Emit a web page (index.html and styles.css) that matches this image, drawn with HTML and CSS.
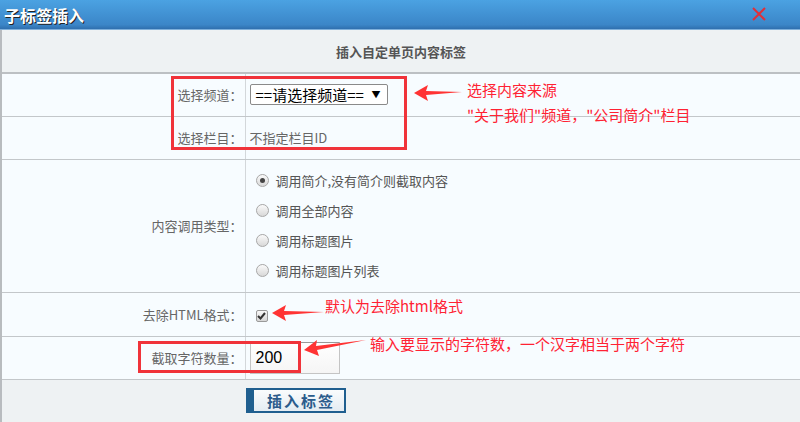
FILE: index.html
```html
<!DOCTYPE html>
<html>
<head>
<meta charset="utf-8">
<link rel="stylesheet" href="styles.css">
</head>
<body>
<div class="dialog">
  <div class="titlebar">
    <span class="title">子标签插入</span>
    <svg class="close" width="14" height="14" viewBox="0 0 14 14"><path d="M1 1 L13 13 M13 1 L1 13" stroke="#e0303a" stroke-width="2"/></svg>
  </div>
  <div class="body">
    <table class="form">
      <tr class="head"><td colspan="2">插入自定单页内容标签</td></tr>
      <tr class="r43">
        <td class="lbl">选择频道：</td>
        <td class="val"><div class="select"><span>==请选择频道==</span><span class="caret">▼</span></div></td>
      </tr>
      <tr class="r43">
        <td class="lbl">选择栏目：</td>
        <td class="val">不指定栏目ID</td>
      </tr>
      <tr class="rbig">
        <td class="lbl">内容调用类型：</td>
        <td class="val">
          <div class="radios">
            <label class="radio"><span class="dot on"></span>调用简介,没有简介则截取内容</label>
            <label class="radio"><span class="dot"></span>调用全部内容</label>
            <label class="radio"><span class="dot"></span>调用标题图片</label>
            <label class="radio"><span class="dot"></span>调用标题图片列表</label>
          </div>
        </td>
      </tr>
      <tr class="r44">
        <td class="lbl">去除HTML格式：</td>
        <td class="val"><span class="check"><svg width="9" height="8" viewBox="0 0 9 8"><path d="M1 4 L3.5 6.5 L8 1" stroke="#333" stroke-width="2" fill="none"/></svg></span></td>
      </tr>
      <tr class="r43">
        <td class="lbl">截取字符数量：</td>
        <td class="val"><div class="num">200</div></td>
      </tr>
      <tr class="foot"><td></td><td><button class="btn">插入标签</button></td></tr>
    </table>

    <div class="anno box1"></div>
    <div class="anno box2"></div>
    <svg class="anno arr arr1" width="48" height="16" viewBox="0 0 48 16"><path d="M0 8 L14 0 L12 6 L48 7 L12 10 L14 16 Z" fill="#f33"/></svg>
    <svg class="anno arr arr2" width="52" height="16" viewBox="0 0 52 16"><path d="M0 8 L14 0 L12 6 L52 7 L12 10 L14 16 Z" fill="#f33"/></svg>
    <svg class="anno arr arr3" width="62" height="18" viewBox="0 0 62 18"><path d="M0 12 L13 2 L12 8 L62 2 L13 12 L15 18 Z" fill="#f33"/></svg>
    <div class="anno note note1">选择内容来源<br>"关于我们"频道，"公司简介"栏目</div>
    <div class="anno note note2">默认为去除html格式</div>
    <div class="anno note note3">输入要显示的字符数，一个汉字相当于两个字符</div>
  </div>
</div>
</body>
</html>
```
FILE: styles.css
```css
* { box-sizing: border-box; }
html, body { margin: 0; padding: 0; }
body {
  width: 800px; height: 422px; overflow: hidden;
  font-family: "Noto Sans CJK SC", "Noto Sans", sans-serif;
  background: #eef2f3;
}
.dialog { width: 800px; height: 422px; position: relative; }
.titlebar {
  height: 30px;
  background: linear-gradient(#4ba2e2, #3b86c8 85%, #2f6fae);
  border-bottom: 1px solid #7fb0db;
  display: flex; align-items: center; justify-content: space-between;
  padding: 0 34px 0 4px;
}
.title {
  color: #fff; font-weight: bold; font-size: 16px; letter-spacing: 0;
  text-shadow: 1px 1px 0 #222;
  line-height: 28px;
}
.close { margin-top: -2px; }
.body {
  position: relative;
  border-left: 2px solid #b8bcbf;
  height: 392px;
}
.form {
  width: 100%;
  border-collapse: collapse;
  font-size: 13px; color: #666;
}
.form td { padding: 0; border-bottom: 1px solid #c3c7ca; }
.head td {
  height: 43px; background: #eef2f3; text-align: center;
  font-weight: bold; color: #555; font-size: 13px;
  border-bottom: 2px solid #bcc0c3;
}
.r43 td, .r44 td, .rbig td { background: #f7fcff; }
.r43 td { height: 43px; }
.r44 td { height: 44px; }
.rbig td { height: 133px; }
.lbl {
  width: 243px; text-align: right; padding-right: 2px !important;
  border-right: 1px solid #d3d7da; color: #666;
}
.val { padding-left: 4px !important; }
.select {
  width: 138px; height: 21px; border: 1px solid #8a8a8a; border-radius: 2px;
  background: #fff; display: flex; align-items: center; justify-content: space-between;
  padding: 0 6px 0 5px; color: #000; font-size: 15px; line-height: 19px;
}
.caret { font-size: 9px; }
.radios { display: flex; flex-direction: column; gap: 10px; padding-left: 6px; }
.radio { display: flex; align-items: center; height: 20px; gap: 7px; color: #555; }
.dot {
  width: 13px; height: 13px; border-radius: 50%;
  border: 1px solid #a8a8a8;
  background: linear-gradient(#fafafa, #d8d8d8);
  display: flex; align-items: center; justify-content: center;
}
.dot.on::after { content: ""; width: 5px; height: 5px; border-radius: 50%; background: #444; }
.check {
  display: inline-flex; align-items: center; justify-content: center;
  width: 12px; height: 12px; margin-left: 6px; margin-top: 4px;
  border: 1px solid #9a9a9a; border-radius: 2px;
  background: linear-gradient(#f8f8f8, #d6d6d6);
}
.num {
  width: 90px; height: 32px; border: 1px solid #c4c4c4; border-top-color: #999;
  background: linear-gradient(#fff, #f5f5f5);
  color: #000; font-size: 16px; font-family: "Liberation Sans", "Noto Sans", sans-serif;
  display: flex; align-items: center; padding-left: 5px;
}
.foot td { height: 43px; background: #eef2f3; border-bottom: none; }
.foot td:first-child { border-right: none; }
.btn {
  margin-left: 1px; width: 100px; height: 25px;
  border: 2px solid #1f5f8f; border-left-width: 8px;
  background: linear-gradient(#fafcfd, #e4ecf2);
  color: #2b5c8c; font-weight: bold; font-size: 15px; letter-spacing: 2px;
  font-family: "Noto Sans CJK SC", sans-serif; padding: 0 0 0 4px; line-height: 20px;
}
.anno { position: absolute; }
.box1 { left: 169px; top: 46px; width: 236px; height: 74px; border: 3px solid #f0333a; }
.box2 { left: 136px; top: 311px; width: 163px; height: 32px; border: 3px solid #f0333a; }
.arr1 { left: 412px; top: 55px; }
.arr2 { left: 270px; top: 275px; }
.arr3 { left: 302px; top: 308px; }
.note { color: #f23; font-size: 15px; line-height: 25px; white-space: nowrap; }
.note1 { left: 465px; top: 47px; }
.note2 { left: 323px; top: 263px; }
.note3 { left: 368px; top: 301px; }
```
